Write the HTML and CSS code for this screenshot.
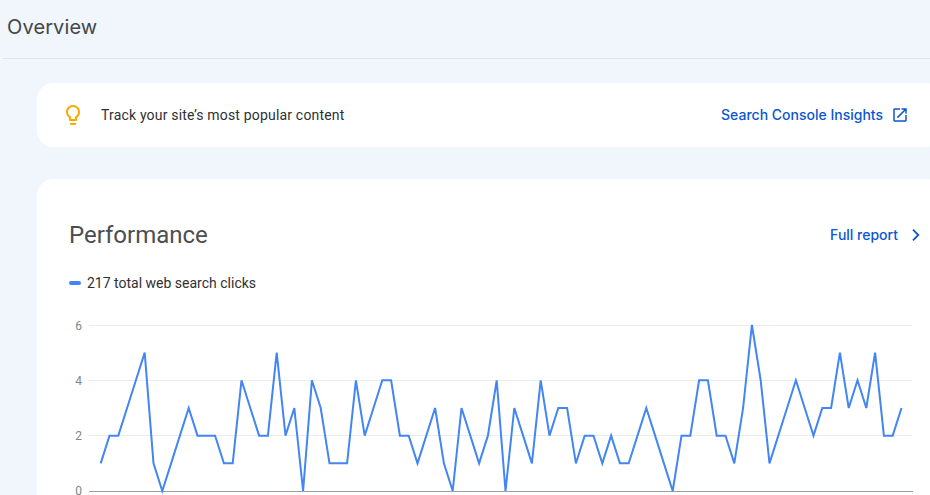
FILE: index.html
```html
<!DOCTYPE html>
<html>
<head>
  <title>Overview</title>
  <meta http-equiv="Content-Type" content="text/html; charset=UTF-8" />
  <link rel="stylesheet" href="styles.css">
</head>
<body>
  <header class="page-header">
    <h1 class="page-title">Overview</h1>
  </header>

  <main class="content">
    <section class="card tip-card">
      <svg class="tip-icon" width="24" height="24" viewBox="0 0 24 24">
        <path d="M9 21c0 .55.45 1 1 1h4c.55 0 1-.45 1-1v-1H9v1zm3-19C8.14 2 5 5.14 5 9c0 2.38 1.19 4.47 3 5.74V17c0 .55.45 1 1 1h6c.55 0 1-.45 1-1v-2.26c1.81-1.27 3-3.36 3-5.74 0-3.86-3.14-7-7-7zm2.85 11.1l-.85.6V16h-4v-2.3l-.85-.6C7.8 12.16 7 10.63 7 9c0-2.76 2.24-5 5-5s5 2.24 5 5c0 1.63-.8 3.16-2.15 4.1z"/>
      </svg>
      <span class="tip-text">Track your site’s most popular content</span>
      <a class="link insights-link" href="#">
        <span class="link-text">Search Console Insights</span>
        <svg width="18" height="18" viewBox="0 0 24 24">
          <path d="M19 19H5V5h7V3H5c-1.11 0-2 .9-2 2v14c0 1.1.89 2 2 2h14c1.1 0 2-.9 2-2v-7h-2v7zM14 3v2h3.59l-9.83 9.83 1.41 1.41L19 6.41V10h2V3h-7z"/>
        </svg>
      </a>
    </section>

    <section class="card performance-card">
      <div class="performance-head">
        <h2 class="performance-title">Performance</h2>
        <a class="link report-link" href="#">
          <span class="link-text">Full report</span>
          <svg class="chevron" width="24" height="24" viewBox="0 0 24 24">
            <path d="M9 6.7L14.3 12 9 17.3"/>
          </svg>
        </a>
      </div>

      <div class="legend">
        <span class="legend-mark"></span>
        <span>217 total web search clicks</span>
      </div>

      <svg class="chart" width="850" height="180" viewBox="0 0 850 180">
        <line class="grid" x1="20" y1="10.5" x2="843" y2="10.5"/>
        <line class="grid" x1="20" y1="65.5" x2="843" y2="65.5"/>
        <line class="grid" x1="20" y1="120.5" x2="843" y2="120.5"/>
        <line class="axis" x1="20" y1="176.5" x2="844" y2="176.5"/>
        <text class="tick" x="13" y="14.5">6</text>
        <text class="tick" x="13" y="69.5">4</text>
        <text class="tick" x="13" y="125">2</text>
        <text class="tick" x="13" y="180">0</text>
        <!-- one point per day, x = day, y = clicks -->
        <polyline class="series" transform="translate(31.7 176) scale(8.8 -27.67)" points="0,1 1,2 2,2 3,3 4,4 5,5 6,1 7,0 8,1 9,2 10,3 11,2 12,2 13,2 14,1 15,1 16,4 17,3 18,2 19,2 20,5 21,2 22,3 23,0 24,4 25,3 26,1 27,1 28,1 29,4 30,2 31,3 32,4 33,4 34,2 35,2 36,1 37,2 38,3 39,1 40,0 41,3 42,2 43,1 44,2 45,4 46,0 47,3 48,2 49,1 50,4 51,2 52,3 53,3 54,1 55,2 56,2 57,1 58,2 59,1 60,1 61,2 62,3 63,2 64,1 65,0 66,2 67,2 68,4 69,4 70,2 71,2 72,1 73,3 74,6 75,4 76,1 77,2 78,3 79,4 80,3 81,2 82,3 83,3 84,5 85,3 86,4 87,3 88,5 89,2 90,2 91,3"/>
      </svg>
    </section>
  </main>
</body>
</html>
```

FILE: styles.css
```css
html, body {
  height: 100%;
  overflow: hidden;
}
body {
  margin: 0;
  background-color: #f1f5fc;
  font-family: Roboto, sans-serif;
  font-size: 14px;
  color: #2f3033;
}
.page-header {
  height: 58px;
  margin-left: 3px;
  padding-left: 4px;
  border-bottom: 1px solid #e1e3e1;
}
.page-title {
  margin: 0;
  font-family: Inter, sans-serif;
  font-size: 20px;
  font-weight: 400;
  line-height: 54px;
  letter-spacing: 0.12px;
  color: #444746;
}
.content {
  display: flex;
  flex-direction: column;
  gap: 32px;
  margin: 24px -12px 0 37px;
}
.card {
  background-color: #fff;
  border-radius: 16px;
}
.tip-card {
  display: flex;
  align-items: center;
  height: 64px;
  padding: 0 33px 0 24px;
}
.tip-icon {
  fill: #f9ab00;
  margin-right: 16px;
}
.tip-text {
  flex: 1;
  letter-spacing: 0.18px;
}
.link {
  display: flex;
  align-items: center;
  color: #0b57d0;
  font-family: Inter, sans-serif;
  font-weight: 500;
  text-decoration: none;
}
.link-text {
  margin-bottom: 2px;
}
.link svg {
  fill: currentColor;
}
.insights-link {
  gap: 8px;
}
.performance-card {
  height: 400px;
  padding: 32px 14px 0 32px;
}
.performance-head {
  display: flex;
  align-items: center;
  justify-content: space-between;
  height: 48px;
}
.performance-title {
  margin: 0;
  font-size: 24px;
  font-weight: 400;
  color: #4b4e50;
}
.report-link {
  gap: 6px;
}
.link .chevron {
  fill: none;
  stroke: currentColor;
  stroke-width: 1.8;
}
.legend {
  display: flex;
  align-items: center;
  gap: 6px;
  margin-top: 14px;
  height: 20px;
}
.legend-mark {
  width: 12px;
  height: 4px;
  border-radius: 2px;
  background-color: #4285f4;
}
.chart {
  display: block;
  margin-top: 22px;
  overflow: visible;
}
.grid {
  stroke: #ebebeb;
  stroke-width: 1;
}
.axis {
  stroke: #9aa0a6;
  stroke-width: 1;
}
.tick {
  font-family: Roboto, sans-serif;
  font-size: 12px;
  fill: #80868b;
  text-anchor: end;
}
.series {
  fill: none;
  stroke: #4285f4;
  stroke-width: 2;
  vector-effect: non-scaling-stroke;
}
```
